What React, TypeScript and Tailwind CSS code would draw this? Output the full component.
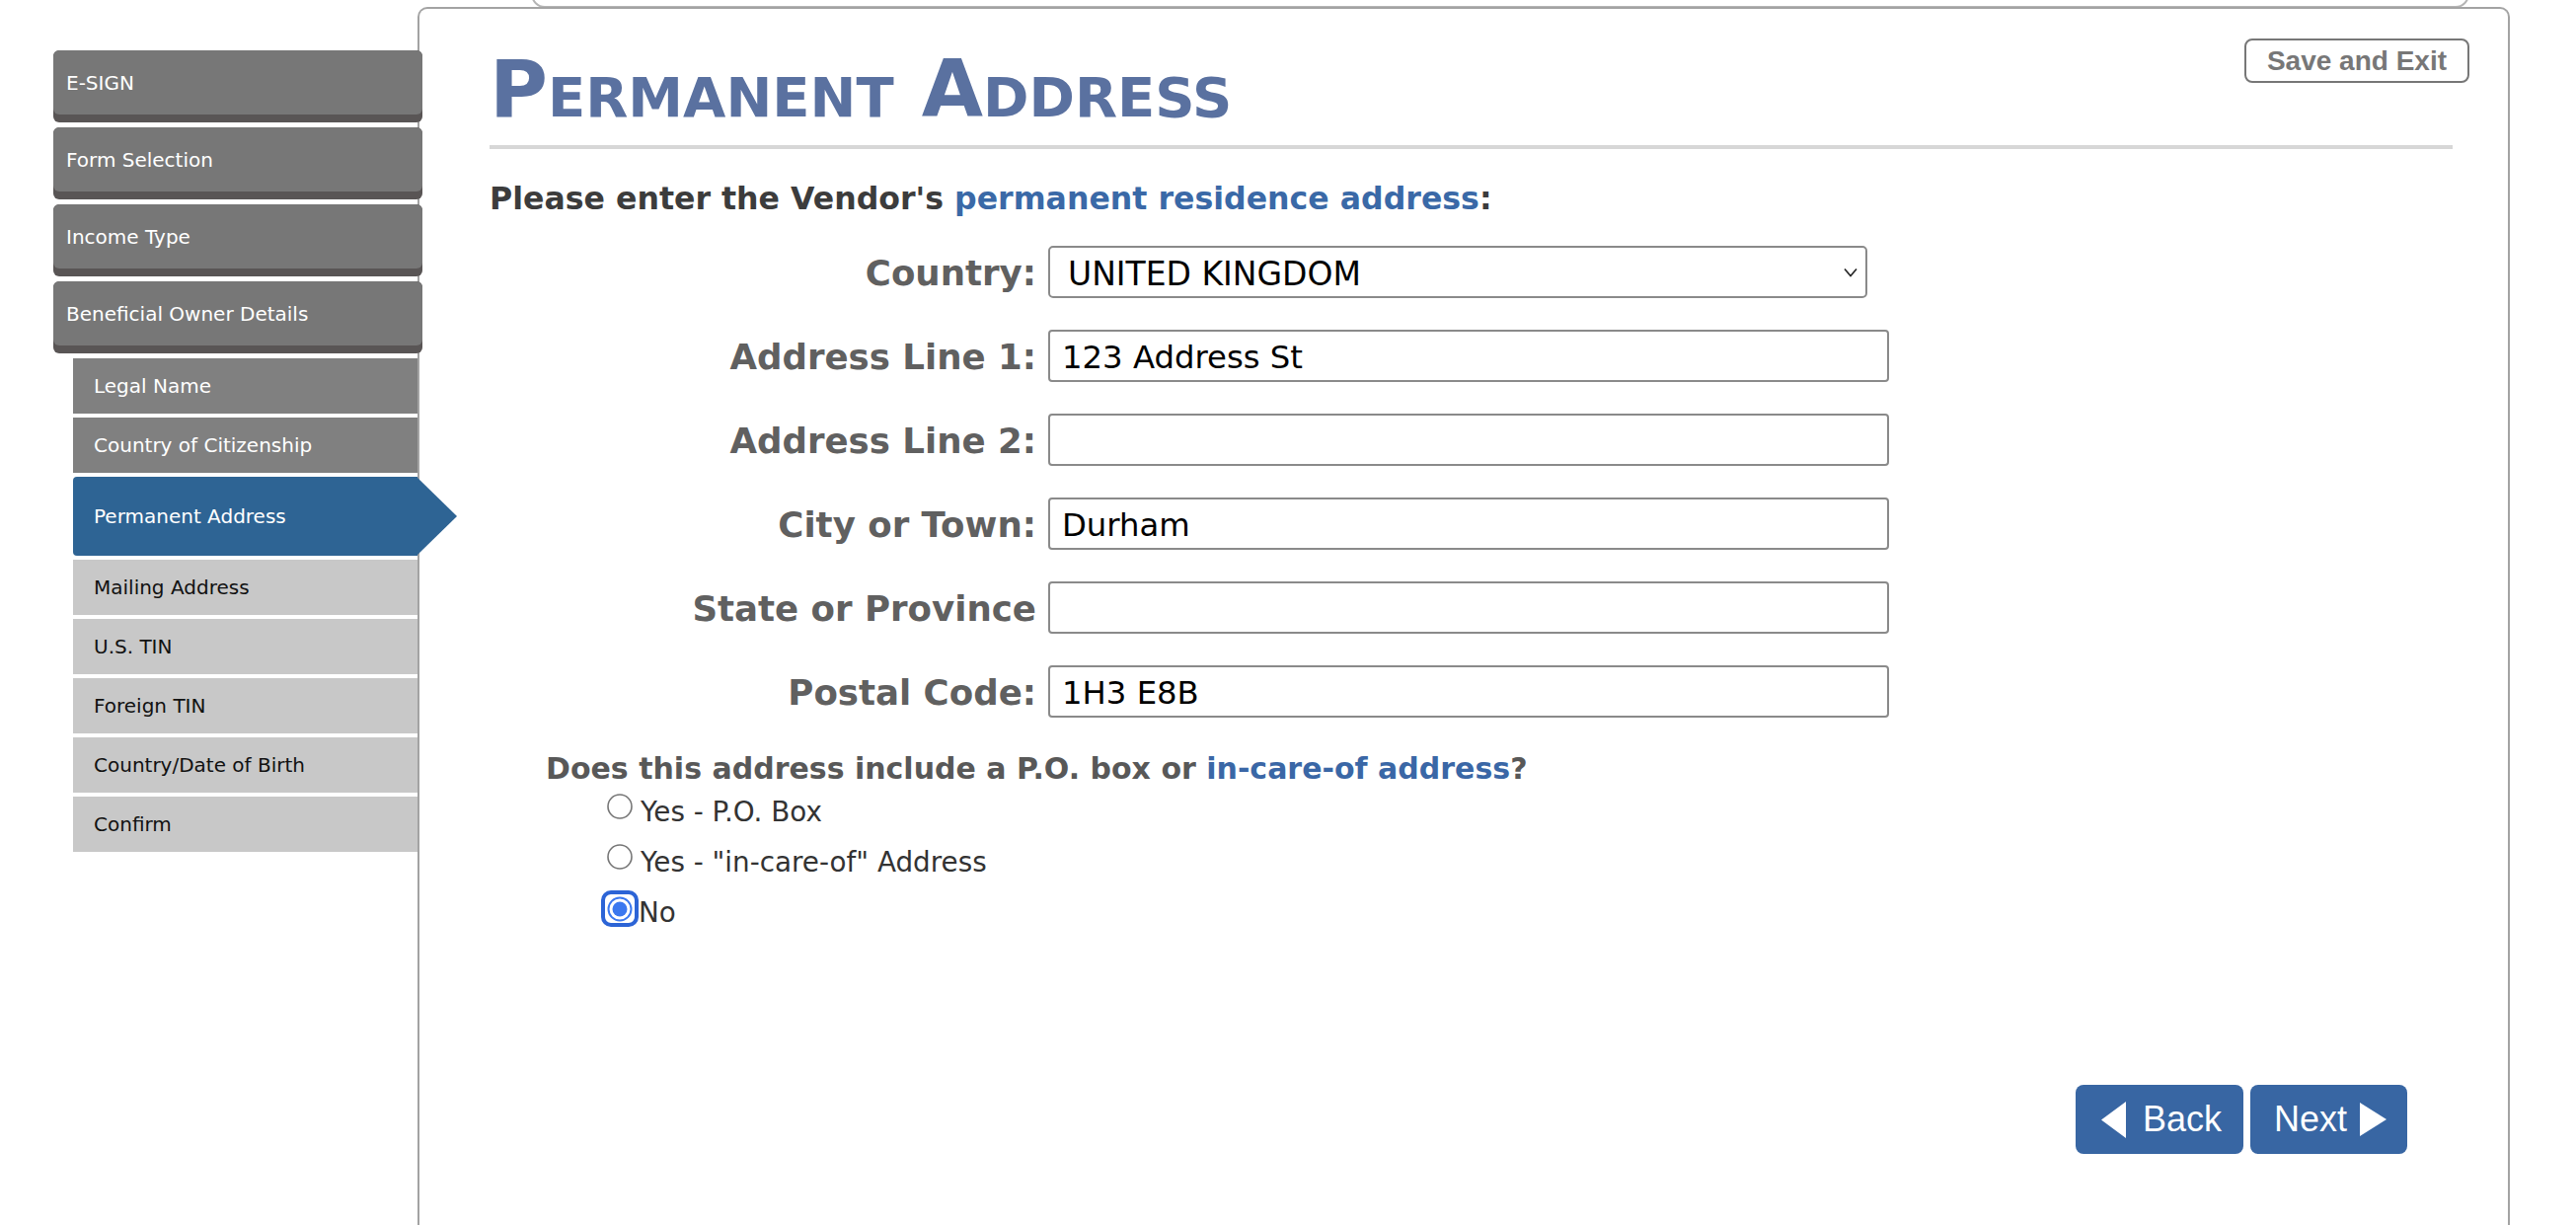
import React from "react";

function MainItem({ label }: { label: string }) {
  return (
    <div className="w-[374px] rounded-[6px] bg-[#595555] pb-[8px]">
      <div className="flex h-[65px] items-center rounded-[6px] bg-[#777777] pl-[13px] text-[20px] leading-none text-white">
        {label}
      </div>
    </div>
  );
}

function SubItem({ label, state }: { label: string; state: "done" | "active" | "todo" }) {
  if (state === "active") {
    return (
      <div className="relative flex h-[80px] w-[349px] items-center rounded-l-[4px] bg-[#2e6494] pl-[21px] text-[20px] leading-none text-white">
        {label}
        <svg className="absolute left-[348px] top-0" width="42" height="80" viewBox="0 0 42 80">
          <polygon points="0,0 41,40 0,80" fill="#2e6494" />
        </svg>
      </div>
    );
  }
  const cls =
    state === "done"
      ? "flex h-[56px] w-[349px] items-center bg-[#808080] pl-[21px] text-[20px] leading-none text-white"
      : "flex h-[56px] w-[349px] items-center bg-[#c8c8c8] pl-[21px] text-[20px] leading-none text-[#111111]";
  return <div className={cls}>{label}</div>;
}

function Field({ label, value, select }: { label: string; value?: string; select?: boolean }) {
  return (
    <div className="flex items-center gap-[12px]">
      <div className="w-[554px] pt-[3px] text-right text-[35.6px] font-bold leading-none text-[#606060]">{label}</div>
      {select ? (
        <div className="flex h-[53px] w-[830px] items-center justify-between rounded-[5px] border-2 border-[#8a8a8a] pl-[18px] pr-[8px] text-[33px] leading-none text-black">
          <span className="pt-[3px]">{value}</span>
          <svg width="14" height="10" viewBox="0 0 14 10">
            <polyline points="1,1.5 7,8.5 13,1.5" fill="none" stroke="#222" strokeWidth="1.6" />
          </svg>
        </div>
      ) : (
        <div className="flex h-[53px] w-[852px] items-center rounded-[4px] border-2 border-[#8a8a8a] pl-[12px] pt-[3px] text-[32.3px] leading-none text-black">
          {value}
        </div>
      )}
    </div>
  );
}

function Radio({ label, checked }: { label: string; checked?: boolean }) {
  return (
    <div className="flex h-[51px] items-start">
      {checked ? (
        <div className="-ml-[6px] -mt-[4px] flex h-[37px] w-[38px] items-center justify-center rounded-[10px] border-[4px] border-[#2c64d6]">
          <svg width="26" height="26" viewBox="0 0 26 26">
            <circle cx="13" cy="13" r="11.5" fill="white" stroke="#3b78ef" strokeWidth="2" />
            <circle cx="13" cy="13" r="7.5" fill="#3b78ef" />
          </svg>
        </div>
      ) : (
        <svg width="26" height="26" viewBox="0 0 26 26">
          <circle cx="13" cy="13" r="12" fill="white" stroke="#767676" strokeWidth="1.6" />
        </svg>
      )}
      <span className={checked ? "mt-[5px] text-[27.8px] leading-none text-[#333333]" : "ml-[8px] mt-[5px] text-[27.8px] leading-none text-[#333333]"}>
        {label}
      </span>
    </div>
  );
}

export default function App() {
  return (
    <div className="relative h-[1241px] w-[2610px] overflow-hidden bg-white font-['DejaVu_Sans',Verdana,sans-serif]">
      <div className="absolute left-[538px] top-[-32px] h-[40px] w-[1964px] rounded-b-[14px] border-2 border-[#b4b4b4]" />
      <div className="flex">
        <nav className="relative z-10 flex w-[423px] shrink-0 flex-col gap-[5px] pl-[54px] pt-[51px]">
          <MainItem label="E-SIGN" />
          <MainItem label="Form Selection" />
          <MainItem label="Income Type" />
          <MainItem label="Beneficial Owner Details" />
          <div className="ml-[20px] flex flex-col gap-[4px]">
            <SubItem label="Legal Name" state="done" />
            <SubItem label="Country of Citizenship" state="done" />
            <SubItem label="Permanent Address" state="active" />
            <SubItem label="Mailing Address" state="todo" />
            <SubItem label="U.S. TIN" state="todo" />
            <SubItem label="Foreign TIN" state="todo" />
            <SubItem label="Country/Date of Birth" state="todo" />
            <SubItem label="Confirm" state="todo" />
          </div>
        </nav>
        <main className="relative mt-[7px] h-[1300px] w-[2120px] shrink-0 rounded-t-[10px] border-2 border-b-0 border-[#a3a3a3] bg-white pl-[71px] pr-[56px] pt-[30px]">
          <div className="flex items-start justify-between">
            <h1 className="mt-[11px] text-[80.5px] font-bold leading-none text-[#5a71a0] [font-variant:small-caps]">
              Permanent Address
            </h1>
            <button className="-mr-[17px] flex h-[45px] items-center rounded-[8px] border-2 border-[#777777] px-[21px] font-['Liberation_Sans',Arial,sans-serif] text-[28px] font-bold leading-none text-[#777777]">
              Save and Exit
            </button>
          </div>
          <div className="mt-[16px] h-[4px] bg-[#d7d7d7]" />
          <p className="mt-[35px] text-[31.6px] font-bold leading-none text-[#3c3c3c]">
            Please enter the Vendor's <span className="text-[#3a69a7]">permanent residence address</span>:
          </p>
          <div className="mt-[32px] flex flex-col gap-[32px]">
            <Field label="Country:" value="UNITED KINGDOM" select />
            <Field label="Address Line 1:" value="123 Address St" />
            <Field label="Address Line 2:" value="" />
            <Field label="City or Town:" value="Durham" />
            <Field label="State or Province" value="" />
            <Field label="Postal Code:" value="1H3 E8B" />
          </div>
          <p className="ml-[57px] mt-[37px] text-[30px] font-bold leading-none text-[#585858]">
            Does this address include a P.O. box or <span className="text-[#3a67a6]">in-care-of address</span>?
          </p>
          <div className="ml-[119px] mt-[10px] flex flex-col">
            <Radio label="Yes - P.O. Box" />
            <Radio label={'Yes - "in-care-of" Address'} />
            <Radio label="No" checked />
          </div>
          <div className="mr-[46px] mt-[142px] flex justify-end gap-[7px] font-['Liberation_Sans',Arial,sans-serif]">
            <button className="flex h-[70px] w-[170px] items-center rounded-[8px] bg-[#3866a3] pl-[26px] text-[36px] leading-none text-white">
              <svg width="25" height="37" viewBox="0 0 25 37">
                <polygon points="25,0 0,18.5 25,37" fill="white" />
              </svg>
              <span className="ml-[17px]">Back</span>
            </button>
            <button className="flex h-[70px] w-[159px] items-center rounded-[8px] bg-[#3866a3] pl-[24px] text-[36px] leading-none text-white">
              <span>Next</span>
              <svg className="ml-[13px]" width="27" height="34" viewBox="0 0 27 34">
                <polygon points="0,0 27,17 0,34" fill="white" />
              </svg>
            </button>
          </div>
        </main>
      </div>
    </div>
  );
}
